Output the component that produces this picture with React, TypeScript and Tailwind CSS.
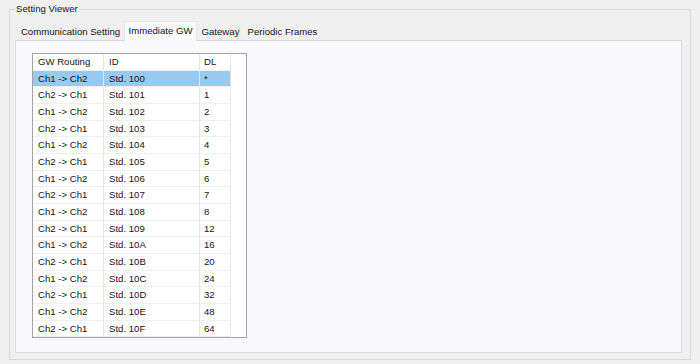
import React from "react";

const rows: [string, string, string][] = [
  ["Ch1 -> Ch2", "Std. 100", "*"],
  ["Ch2 -> Ch1", "Std. 101", "1"],
  ["Ch1 -> Ch2", "Std. 102", "2"],
  ["Ch2 -> Ch1", "Std. 103", "3"],
  ["Ch1 -> Ch2", "Std. 104", "4"],
  ["Ch2 -> Ch1", "Std. 105", "5"],
  ["Ch1 -> Ch2", "Std. 106", "6"],
  ["Ch2 -> Ch1", "Std. 107", "7"],
  ["Ch1 -> Ch2", "Std. 108", "8"],
  ["Ch2 -> Ch1", "Std. 109", "12"],
  ["Ch1 -> Ch2", "Std. 10A", "16"],
  ["Ch2 -> Ch1", "Std. 10B", "20"],
  ["Ch1 -> Ch2", "Std. 10C", "24"],
  ["Ch2 -> Ch1", "Std. 10D", "32"],
  ["Ch1 -> Ch2", "Std. 10E", "48"],
  ["Ch2 -> Ch1", "Std. 10F", "64"],
];

function Row({ cells, selected }: { cells: [string, string, string]; selected?: boolean }) {
  const bg = selected ? "bg-[#99c9ef]" : "";
  return (
    <div className="flex h-[16.67px]">
      <div className={`w-[71px] pl-[5px] flex items-center border-r border-b border-r-[#e4e4e4] border-b-[#efefef] ${bg}`}>{cells[0]}</div>
      <div className={`w-[96px] pl-[5px] flex items-center border-r border-b border-r-[#e4e4e4] border-b-[#efefef] ${bg}`}>{cells[1]}</div>
      <div className={`w-[31px] pl-[4px] flex items-center border-r border-b border-r-[#e4e4e4] border-b-[#efefef] ${bg}`}>{cells[2]}</div>
      <div className="flex-1" />
    </div>
  );
}

export default function App() {
  return (
    <div className="w-[700px] h-[364px] bg-[#f0f0f0] pt-[9px] pl-[9px] font-['Liberation_Sans',Arial,sans-serif] text-[9.6px] text-[#141414] leading-none">
      <div className="relative w-[682px] h-[351px] border border-[#d9d9d9] pt-[11px] pl-[5px]">
        <span className="absolute left-[5px] top-[-7px] bg-[#f0f0f0] px-[1px] leading-[12px]">Setting Viewer</span>
        <div className="flex items-end h-[19px] pl-[2px]">
          <div className="w-[107px] h-[17px] flex items-center justify-center">Communication Setting</div>
          <div className="relative z-10 w-[73px] h-[20px] -mb-px flex items-center justify-center bg-[#f9f9fb] border border-b-0 border-[#e6e6e6] pb-[2px]">Immediate GW</div>
          <div className="w-[47px] h-[17px] flex items-center justify-center">Gateway</div>
          <div className="w-[77px] h-[17px] flex items-center justify-center">Periodic Frames</div>
        </div>
        <div className="w-[667px] h-[313px] border border-[#dadada] bg-[#f9f9fb] pt-[12px] pl-[16px]">
          <div className="w-[215px] border border-[#a3a3a3] bg-white">
            <Row cells={["GW Routing", "ID", "DL"]} />
            {rows.map((r, i) => (
              <Row key={i} cells={r} selected={i === 0} />
            ))}
          </div>
        </div>
      </div>
    </div>
  );
}
